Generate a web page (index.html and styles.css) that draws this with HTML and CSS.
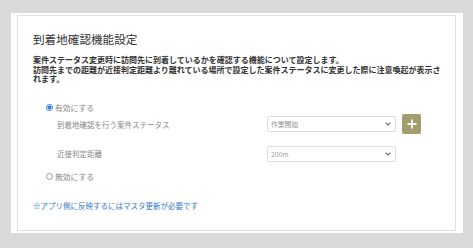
FILE: index.html
```html
<!DOCTYPE html>
<html lang="ja">
<head>
<meta charset="utf-8">
<title>到着地確認機能設定</title>
<link rel="stylesheet" href="styles.css">
</head>
<body>
<div class="frame">
  <div class="panel">
    <section class="card">
      <h1 class="title">到着地確認機能設定</h1>
      <p class="desc">案件ステータス変更時に訪問先に到着しているかを確認する機能について設定します。<br>訪問先までの距離が近接判定距離より離れている場所で設定した案件ステータスに変更した際に注意喚起が表示されます。</p>
      <div class="options">
        <label class="radio-row"><span class="radio checked"></span><span class="radio-text">有効にする</span></label>
        <div class="field-row">
          <span class="field-label">到着地確認を行う案件ステータス</span>
          <div class="select"><span class="select-value">作業開始</span><svg class="chev" viewBox="0 0 6 4" width="6" height="4"><path d="M0.6 0.7 L3 3 L5.4 0.7" fill="none" stroke="#666" stroke-width="1.1"/></svg></div>
          <button class="add" type="button"><svg viewBox="0 0 10 10" width="10" height="10"><path d="M5 0.5 V9.5 M0.5 5 H9.5" stroke="#f4f2e8" stroke-width="2"/></svg></button>
        </div>
        <div class="field-row">
          <span class="field-label">近接判定距離</span>
          <div class="select"><span class="select-value">200m</span><svg class="chev" viewBox="0 0 6 4" width="6" height="4"><path d="M0.6 0.7 L3 3 L5.4 0.7" fill="none" stroke="#666" stroke-width="1.1"/></svg></div>
        </div>
        <label class="radio-row off"><span class="radio"></span><span class="radio-text">無効にする</span></label>
      </div>
      <p class="note">※アプリ側に反映するにはマスタ更新が必要です</p>
    </section>
  </div>
</div>
</body>
</html>
```
FILE: styles.css
```css
html, body {
  margin: 0;
  padding: 0;
  height: 100%;
}
body {
  background: #dadada;
  font-family: "Noto Sans CJK JP", "Noto Sans", sans-serif;
  color: #333;
  overflow: hidden;
}
.frame {
  box-sizing: border-box;
  height: 100vh;
  padding: 13px 10px 15px 11px;
  display: flex;
}
.panel {
  flex: 1;
  background: #fff;
  padding: 2px 7px 2px 6px;
  display: flex;
}
.card {
  flex: 1;
  border: 1px solid #e0e0e0;
  padding: 15px 0 0 15px;
}
.title {
  margin: 0;
  font-size: 11.6px;
  line-height: 16px;
  font-weight: normal;
  color: #333;
}
.desc {
  margin: 8px 0 0;
  padding-right: 8px;
  font-size: 8px;
  line-height: 9.7px;
  font-weight: bold;
  color: #333;
}
.options {
  padding-left: 13px;
}
.radio-row {
  display: flex;
  align-items: center;
  height: 10px;
  margin-top: 18.5px;
  font-size: 7.8px;
  color: #888;
}
.radio-row.off {
  margin-top: 7.5px;
}
.radio {
  box-sizing: border-box;
  width: 7px;
  height: 7px;
  border-radius: 50%;
  border: 1px solid #999;
  margin-right: 2px;
  background: #fff;
}
.radio.checked {
  border-color: #2d7de0;
  background: radial-gradient(circle, #2d7de0 0 1.8px, #fff 2.2px);
}
.field-row {
  display: flex;
  align-items: center;
  height: 20px;
  padding-left: 11px;
  margin-top: 1.5px;
}
.field-row + .field-row {
  margin-top: 9.5px;
}
.field-label {
  width: 210px;
  font-size: 7.5px;
  color: #888;
}
.select {
  box-sizing: border-box;
  width: 129px;
  height: 16px;
  border: 1px solid #ddd;
  border-radius: 2px;
  display: flex;
  align-items: center;
  justify-content: space-between;
  padding: 0 4px 0 3px;
}
.select-value {
  font-size: 6.8px;
  color: #999;
}
.chev {
  display: block;
}
.add {
  box-sizing: border-box;
  width: 19px;
  height: 20px;
  margin-left: 6px;
  padding: 0;
  border: 0;
  border-radius: 2px;
  background: #a39c6c;
  display: flex;
  align-items: center;
  justify-content: center;
}
.add svg {
  display: block;
}
.note {
  margin: 19.5px 0 0;
  font-size: 7.5px;
  line-height: 10px;
  color: #2f78c8;
}
```
